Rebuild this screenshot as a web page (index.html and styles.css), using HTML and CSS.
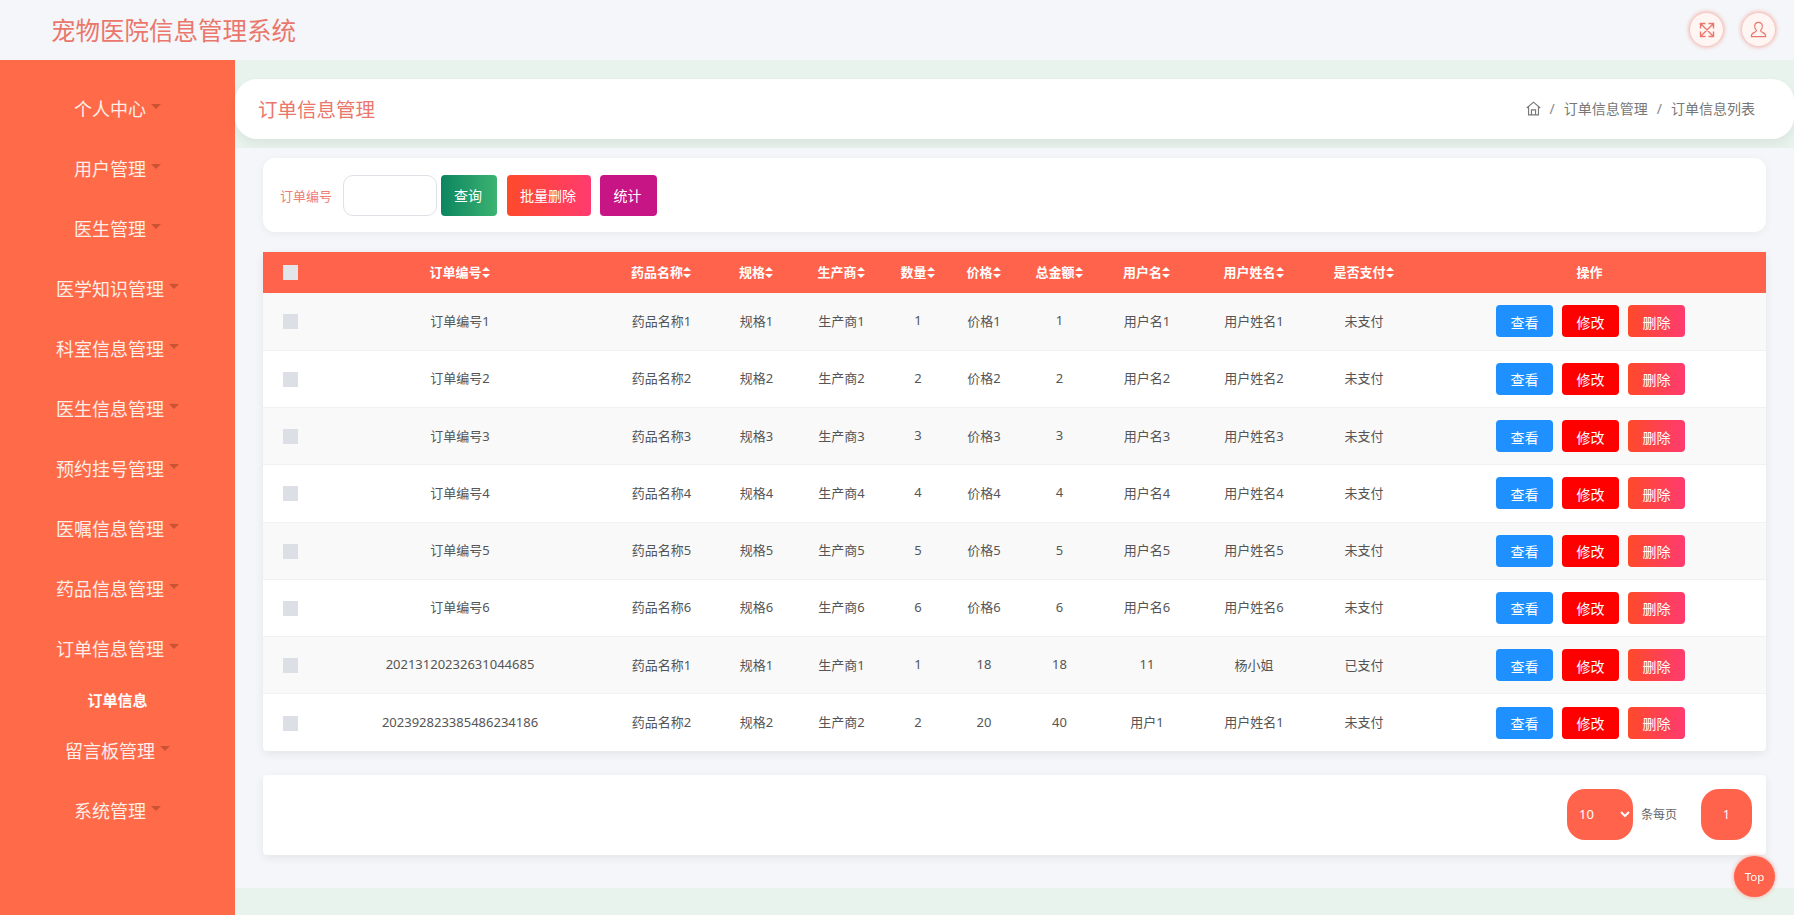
FILE: index.html
```html
<!DOCTYPE html>
<html lang="zh">
<head>
<meta charset="utf-8">
<title>宠物医院信息管理系统</title>
<link rel="stylesheet" href="styles.css">
</head>
<body>
<header class="topbar">
  <div class="brand">宠物医院信息管理系统</div>
  <div class="top-actions">
    <span class="round-icon">
      <svg viewBox="0 0 16 16" class="top-svg"><path d="M1.500 1.500l13 13M14.500 1.500l-13 13M1.500 6.500v-5h5M9.500 1.500h5v5M14.500 9.500v5h-5M6.500 14.500h-5v-5"/></svg>
    </span>
    <span class="round-icon">
      <svg viewBox="0 0 18 18" class="top-svg user-svg"><path d="M9 1.500c-2.500 0-4 1.800-4 4.300 0 1.900.8 3.300 1.800 4.200 0 1-.6 1.500-2 2-1.900.7-3.300 1.200-3.300 3.800v.7h15v-.7c0-2.600-1.400-3.100-3.300-3.800-1.400-.5-2-1-2-2 1-.9 1.800-2.300 1.800-4.200 0-2.500-1.500-4.300-4-4.300z"/></svg>
    </span>
  </div>
</header>
<div class="shell">
  <nav class="sidebar">
    <a class="menu-item"><span>个人中心</span><i class="caret"></i></a>
    <a class="menu-item"><span>用户管理</span><i class="caret"></i></a>
    <a class="menu-item"><span>医生管理</span><i class="caret"></i></a>
    <a class="menu-item"><span>医学知识管理</span><i class="caret"></i></a>
    <a class="menu-item"><span>科室信息管理</span><i class="caret"></i></a>
    <a class="menu-item"><span>医生信息管理</span><i class="caret"></i></a>
    <a class="menu-item"><span>预约挂号管理</span><i class="caret"></i></a>
    <a class="menu-item"><span>医嘱信息管理</span><i class="caret"></i></a>
    <a class="menu-item"><span>药品信息管理</span><i class="caret"></i></a>
    <a class="menu-item"><span>订单信息管理</span><i class="caret"></i></a>
    <a class="submenu-item">订单信息</a>
    <a class="menu-item"><span>留言板管理</span><i class="caret"></i></a>
    <a class="menu-item"><span>系统管理</span><i class="caret"></i></a>
  </nav>
  <main class="main">
    <section class="crumb-bar">
      <h1 class="crumb-title">订单信息管理</h1>
      <div class="crumbs">
        <svg viewBox="0 0 16 16" class="home-svg"><path d="M.8 7.500L8 1.200l7.200 6.300M2.700 6.200v8.600h10.600V6.200M5.800 14.800V9.500h4.400v5.300"/></svg>
        <span class="sep">/</span><span>订单信息管理</span><span class="sep">/</span><span>订单信息列表</span>
      </div>
    </section>
    <section class="content">
      <form class="search-card">
        <label class="search-label">订单编号</label>
        <input class="search-input" type="text">
        <button type="button" class="btn btn-search">查询</button>
        <button type="button" class="btn btn-batch">批量删除</button>
        <button type="button" class="btn btn-stat">统计</button>
      </form>
      <div class="table-card">
        <table class="orders">
          <colgroup>
            <col class="c-check"><col class="c-no"><col class="c-drug"><col class="c-spec"><col class="c-maker"><col class="c-qty"><col class="c-price"><col class="c-total"><col class="c-user"><col class="c-name"><col class="c-paid"><col class="c-op">
          </colgroup>
          <thead>
            <tr>
              <th><span class="check check-head"></span></th>
              <th>订单编号<i class="sort"></i></th>
              <th>药品名称<i class="sort"></i></th>
              <th>规格<i class="sort"></i></th>
              <th>生产商<i class="sort"></i></th>
              <th>数量<i class="sort"></i></th>
              <th>价格<i class="sort"></i></th>
              <th>总金额<i class="sort"></i></th>
              <th>用户名<i class="sort"></i></th>
              <th>用户姓名<i class="sort"></i></th>
              <th>是否支付<i class="sort"></i></th>
              <th class="th-op">操作</th>
            </tr>
          </thead>
          <tbody>
            <tr><td><span class="check"></span></td><td>订单编号1</td><td>药品名称1</td><td>规格1</td><td>生产商1</td><td>1</td><td>价格1</td><td>1</td><td>用户名1</td><td>用户姓名1</td><td>未支付</td><td><div class="ops"><button class="mini mini-view">查看</button><button class="mini mini-edit">修改</button><button class="mini mini-del">删除</button></div></td></tr>
            <tr><td><span class="check"></span></td><td>订单编号2</td><td>药品名称2</td><td>规格2</td><td>生产商2</td><td>2</td><td>价格2</td><td>2</td><td>用户名2</td><td>用户姓名2</td><td>未支付</td><td><div class="ops"><button class="mini mini-view">查看</button><button class="mini mini-edit">修改</button><button class="mini mini-del">删除</button></div></td></tr>
            <tr><td><span class="check"></span></td><td>订单编号3</td><td>药品名称3</td><td>规格3</td><td>生产商3</td><td>3</td><td>价格3</td><td>3</td><td>用户名3</td><td>用户姓名3</td><td>未支付</td><td><div class="ops"><button class="mini mini-view">查看</button><button class="mini mini-edit">修改</button><button class="mini mini-del">删除</button></div></td></tr>
            <tr><td><span class="check"></span></td><td>订单编号4</td><td>药品名称4</td><td>规格4</td><td>生产商4</td><td>4</td><td>价格4</td><td>4</td><td>用户名4</td><td>用户姓名4</td><td>未支付</td><td><div class="ops"><button class="mini mini-view">查看</button><button class="mini mini-edit">修改</button><button class="mini mini-del">删除</button></div></td></tr>
            <tr><td><span class="check"></span></td><td>订单编号5</td><td>药品名称5</td><td>规格5</td><td>生产商5</td><td>5</td><td>价格5</td><td>5</td><td>用户名5</td><td>用户姓名5</td><td>未支付</td><td><div class="ops"><button class="mini mini-view">查看</button><button class="mini mini-edit">修改</button><button class="mini mini-del">删除</button></div></td></tr>
            <tr><td><span class="check"></span></td><td>订单编号6</td><td>药品名称6</td><td>规格6</td><td>生产商6</td><td>6</td><td>价格6</td><td>6</td><td>用户名6</td><td>用户姓名6</td><td>未支付</td><td><div class="ops"><button class="mini mini-view">查看</button><button class="mini mini-edit">修改</button><button class="mini mini-del">删除</button></div></td></tr>
            <tr><td><span class="check"></span></td><td>20213120232631044685</td><td>药品名称1</td><td>规格1</td><td>生产商1</td><td>1</td><td>18</td><td>18</td><td>11</td><td>杨小姐</td><td>已支付</td><td><div class="ops"><button class="mini mini-view">查看</button><button class="mini mini-edit">修改</button><button class="mini mini-del">删除</button></div></td></tr>
            <tr><td><span class="check"></span></td><td>202392823385486234186</td><td>药品名称2</td><td>规格2</td><td>生产商2</td><td>2</td><td>20</td><td>40</td><td>用户1</td><td>用户姓名1</td><td>未支付</td><td><div class="ops"><button class="mini mini-view">查看</button><button class="mini mini-edit">修改</button><button class="mini mini-del">删除</button></div></td></tr>
          </tbody>
        </table>
      </div>
      <div class="pager-card">
        <select class="page-size"><option>10</option><option>20</option><option>50</option></select>
        <span class="page-note">条每页</span>
        <span class="page-num">1</span>
      </div>
    </section>
    <a class="to-top">Top</a>
  </main>
</div>
</body>
</html>
```

FILE: styles.css
```css
* { box-sizing: border-box; }
html, body { margin: 0; height: 100%; overflow: hidden; }
body {
  font-family: "Noto Sans", "Noto Sans CJK SC", sans-serif;
  font-size: 13px;
  color: #555;
  background: #f4f6f9;
}
.topbar {
  height: 60px;
  display: flex;
  align-items: center;
  justify-content: space-between;
  padding: 0 19px 0 51px;
  background: #f4f6f9;
}
.brand { font-size: 24.5px; color: #ea766c; line-height: 1; margin-top: 3px; }
.top-actions { display: flex; gap: 19px; margin-top: -1px; }
.round-icon {
  width: 33px;
  height: 33px;
  border-radius: 50%;
  background: #fff6f3;
  box-shadow: 0 0 4px 1px #f3aaa3;
  display: flex;
  align-items: center;
  justify-content: center;
}
.top-svg { width: 16px; height: 16px; fill: none; stroke: #ea766c; stroke-width: 1.4; }
.user-svg { width: 17px; height: 17px; stroke-width: 1.2; }
.shell { display: flex; height: 855px; }
.sidebar {
  width: 235px;
  flex: none;
  padding-top: 18px;
  background: #ff6b48;
  display: flex;
  flex-direction: column;
}
.menu-item {
  height: 60px;
  flex: none;
  display: flex;
  align-items: center;
  justify-content: center;
  padding-bottom: 1px;
  font-size: 18px;
  color: #fdeee9;
}
.caret {
  margin: -3px 0 0 5px;
  border-style: solid;
  border-width: 5px 5px 0;
  border-color: #cb5233 transparent transparent;
}
.submenu-item {
  height: 42px;
  flex: none;
  display: flex;
  align-items: center;
  justify-content: center;
  font-size: 15px;
  font-weight: 700;
  color: #fff;
}
.main {
  flex: 1;
  min-width: 0;
  background: #e7f3ec;
  padding-top: 19px;
  display: flex;
  flex-direction: column;
}
.crumb-bar {
  height: 60px;
  flex: none;
  display: flex;
  align-items: center;
  justify-content: space-between;
  padding: 0 39px 0 23px;
  background: #fff;
  border-radius: 22px;
  box-shadow: 0 5px 12px rgba(0, 0, 0, .06);
}
.crumb-title { margin: 0 0 2px; font-size: 19.500px; font-weight: 400; color: #ea766c; }
.crumbs { display: flex; align-items: center; margin-bottom: 2px; font-size: 14px; color: #777; }
.home-svg { width: 15px; height: 15px; fill: none; stroke: #777; stroke-width: 1.200; }
.sep { margin: 0 9px; color: #888; }
.content {
  margin-top: 9px;
  height: 740px;
  flex: none;
  padding: 10px 28px 0;
  background: #f4f6f9;
}
.search-card {
  height: 74px;
  display: flex;
  align-items: center;
  padding: 0 0 0 17px;
  background: #fff;
  border-radius: 12px;
  box-shadow: 0 2px 8px rgba(0, 0, 0, .05);
}
.search-label { width: 52px; margin-right: 11px; color: #ee7d73; font-size: 13px; white-space: nowrap; }
.search-input {
  width: 94px;
  height: 41px;
  margin-right: 4px;
  border: 1.500px solid #dfe1e6;
  border-radius: 10px;
  background: #fff;
}
.btn {
  height: 41px;
  padding: 0 2px 0 0;
  border: 0;
  border-radius: 4px;
  color: #fff;
  font: inherit;
  font-size: 14px;
}
.btn-search { width: 56px; margin-right: 10px; background: linear-gradient(90deg, #0c8560, #3cb371); }
.btn-batch { width: 84px; margin-right: 9px; background: linear-gradient(90deg, #ff4a2a, #ff3b6f); }
.btn-stat { width: 57px; background: #c71585; }
.table-card {
  margin-top: 20px;
  background: #fff;
  border-radius: 0 0 4px 4px;
  box-shadow: 0 3px 10px rgba(0, 0, 0, .07);
}
.orders { width: 100%; table-layout: fixed; border-collapse: collapse; }
.c-check { width: 54px; }
.c-no { width: 286px; }
.c-drug { width: 117px; }
.c-spec { width: 73px; }
.c-maker { width: 97px; }
.c-qty { width: 56px; }
.c-price { width: 76px; }
.c-total { width: 75px; }
.c-user { width: 100px; }
.c-name { width: 114px; }
.c-paid { width: 106px; }
.orders th {
  height: 41px;
  padding: 0 0 2px;
  background: #ff634c;
  color: #fff;
  font-size: 13px;
  font-weight: 700;
  text-align: center;
}
.orders .th-op { padding-right: 4px; }
.orders td {
  height: 57.250px;
  padding: 0 0 2px;
  border-bottom: 1px solid #f1f1f1;
  text-align: center;
  color: #555;
}
.orders tbody tr:nth-child(odd) td { background: #f9f9f9; }
.orders tbody tr:last-child td { border-bottom: 0; }
.check { display: inline-block; width: 15px; height: 15px; background: #dcdfe6; vertical-align: middle; }
.check-head { background: #e2e5ea; }
.sort { display: inline-block; width: 9px; height: 11px; position: relative; vertical-align: -1px; }
.sort::before, .sort::after {
  content: "";
  position: absolute;
  left: 0;
  border-left: 4.500px solid transparent;
  border-right: 4.500px solid transparent;
}
.sort::before { top: 0; border-bottom: 4.500px solid #fff; }
.sort::after { bottom: 0; border-top: 4.500px solid #fff; }
.ops { display: flex; justify-content: center; gap: 9px; padding: 2px 2px 0 0; }
.mini {
  width: 57px;
  height: 32px;
  padding: 1px 0 0;
  border: 0;
  border-radius: 4px;
  color: #fff;
  font: inherit;
  font-size: 14px;
}
.mini-view { background: #1e90ff; }
.mini-edit { background: #f00; }
.mini-del { background: linear-gradient(90deg, #ff4a2a, #ff3b6f); }
.pager-card {
  height: 80px;
  margin-top: 24px;
  display: flex;
  align-items: center;
  justify-content: flex-end;
  padding: 0 14px 2px 0;
  background: #fff;
  border-radius: 4px;
  box-shadow: 0 3px 10px rgba(0, 0, 0, .07);
}
.page-size {
  width: 66px;
  height: 51px;
  padding-left: 8px;
  border: 0;
  border-radius: 18px;
  background-color: #ff634c;
  color: #fff;
  font: inherit;
  font-size: 13px;
}
.page-note { margin: 0 24px 0 8px; font-size: 12px; color: #666; white-space: nowrap; }
.page-num {
  width: 51px;
  height: 51px;
  border-radius: 18px;
  background: #ff634c;
  color: #fff;
  display: flex;
  align-items: center;
  justify-content: center;
  font-size: 12px;
}
.to-top {
  position: fixed;
  left: 1734px;
  top: 856px;
  width: 41px;
  height: 41px;
  border-radius: 50%;
  background: #ff634c;
  box-shadow: 0 0 4px #ff9c8f;
  color: #fff;
  font-size: 11.500px;
  display: flex;
  align-items: center;
  justify-content: center;
}
```
